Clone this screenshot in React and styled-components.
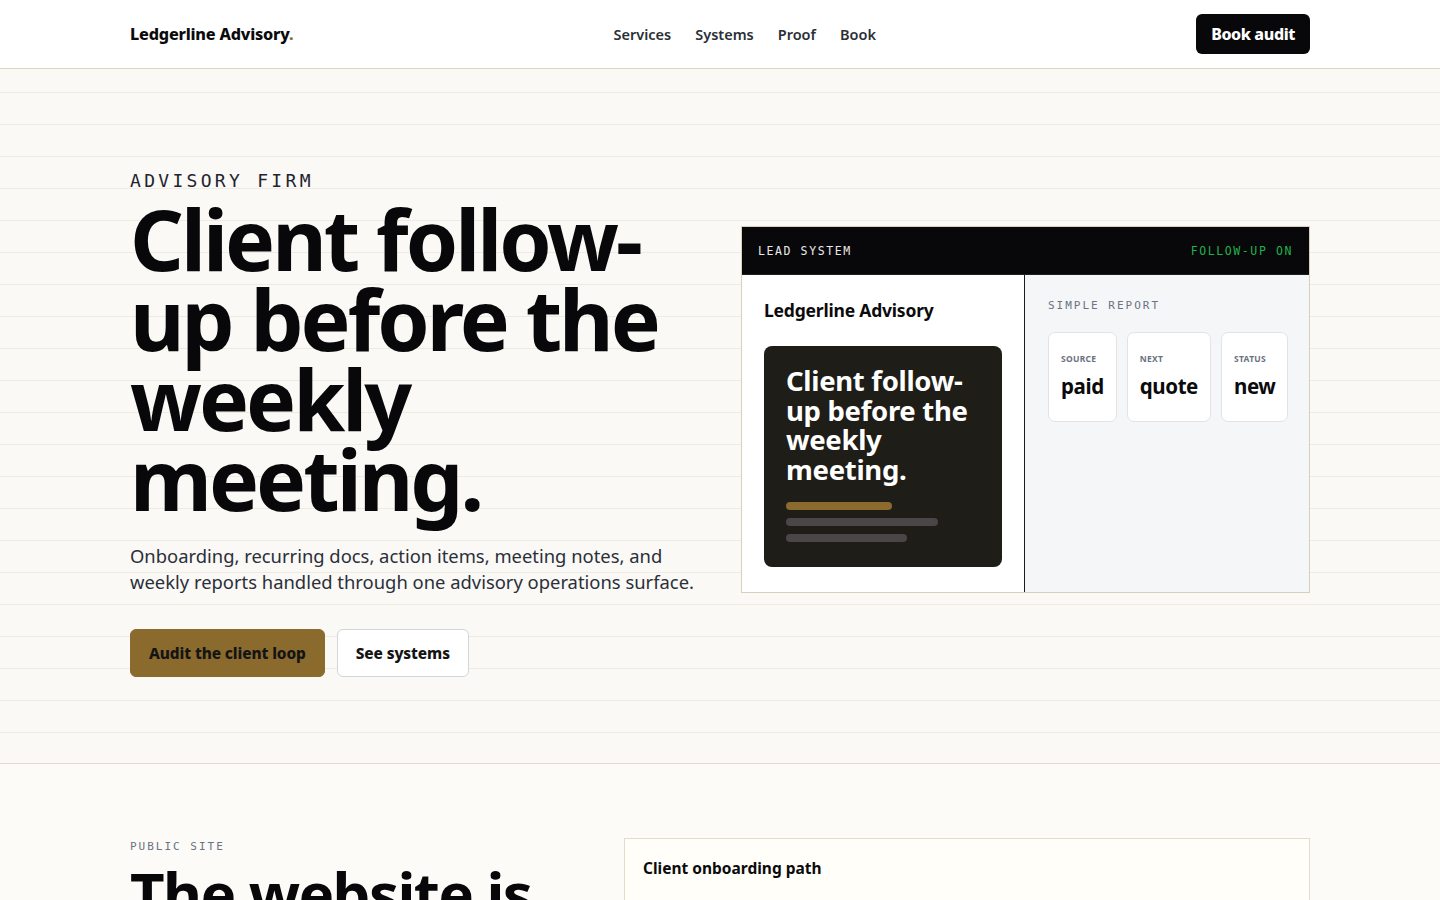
import React from "react";
import { styled, createGlobalStyle } from "styled-components";

const GlobalStyle = createGlobalStyle`
  * { box-sizing: border-box; }
  body {
    margin: 0;
    background: #fcfbf7;
    font-family: "Noto Sans", "Open Sans", Arial, sans-serif;
    color: #0b0b0d;
  }
  h1, h2, h3, p { margin: 0; }
`;

const mono = `"DejaVu Sans Mono", "Liberation Mono", monospace`;

const Container = styled.div`
  width: 1180px;
  margin: 0 auto;
`;

const Header = styled.header`
  background: #fff;
  border-bottom: 1px solid #ddd6c6;
  height: 69px;
`;

const HeaderInner = styled(Container)`
  height: 68px;
  display: flex;
  justify-content: space-between;
  align-items: center;
`;

const Logo = styled.a`
  font-size: 16.2px;
  font-weight: 800;
  color: #0b0b0d;
  letter-spacing: -0.2px;
  & span { color: #8b6a2e; }
`;

const Nav = styled.nav`
  display: flex;
  gap: 24px;
  & a {
    font-size: 14.5px;
    font-weight: 600;
    color: #2b2f36;
    text-decoration: none;
  }
`;

const HeaderButton = styled.a`
  background: #08080a;
  color: #fff;
  font-weight: 800;
  font-size: 16px;
  height: 40px;
  padding: 0 15px;
  border-radius: 6px;
  display: flex;
  align-items: center;
  letter-spacing: -0.4px;
`;

const Hero = styled.section`
  border-bottom: 1px solid #dfdbd0;
  background-color: #faf9f5;
  background-image: repeating-linear-gradient(
    to bottom,
    transparent 0 23px,
    #eeebe3 23px 24px,
    transparent 24px 32px
  );
`;

const HeroInner = styled(Container)`
  display: grid;
  grid-template-columns: minmax(0, 1fr) 569px;
  gap: 40px;
  align-items: start;
  padding: 101px 0 86px;
`;

const Eyebrow = styled.p`
  font-family: ${mono};
  font-size: ${(p) => p.$size || 12}px;
  letter-spacing: ${(p) => p.$spacing || 2}px;
  color: ${(p) => p.$color || "#6b7280"};
  text-transform: uppercase;
`;

const HeroTitle = styled.h1`
  font-size: 84px;
  line-height: 80px;
  font-weight: 700;
  letter-spacing: -3px;
  margin-top: 8px;
  color: #08080a;
`;

const Lead = styled.p`
  margin-top: 24px;
  font-size: 18.4px;
  line-height: 26px;
  color: #2a2f3a;
`;

const Actions = styled.div`
  display: flex;
  gap: 12px;
  margin-top: 34px;
`;

const Button = styled.a`
  height: 48px;
  display: flex;
  align-items: center;
  padding: 0 18px;
  border-radius: 6px;
  font-size: 15.4px;
  font-weight: 800;
  color: #141414;
  letter-spacing: -0.1px;
  background: ${(p) => (p.$primary ? "#8b6a2e" : "#fff")};
  border: 1px solid ${(p) => (p.$primary ? "#8b6a2e" : "#d3d6de")};
`;

const Card = styled.div`
  margin-top: 56px;
  border: 1px solid #d8cfbd;
  background: #fff;
`;

const CardBar = styled.div`
  background: #08080a;
  height: 48px;
  padding: 0 16px;
  display: flex;
  align-items: center;
  justify-content: space-between;
  border-bottom: 1px solid #1f1f22;
`;

const CardBody = styled.div`
  display: grid;
  grid-template-columns: 283px minmax(0, 1fr);
  height: 317px;
`;

const Pane = styled.div`
  min-width: 0;
  padding: ${(p) => p.$pad || "22px"};
  background: ${(p) => p.$bg || "#fff"};
  border-right: ${(p) => (p.$divider ? "1px solid #1c1c1e" : "none")};
`;

const PaneTitle = styled.h3`
  font-size: 17.5px;
  font-weight: 700;
  letter-spacing: -0.2px;
  margin-top: 1px;
`;

const Preview = styled.div`
  margin-top: 24px;
  background: #1f1d18;
  border-radius: 8px;
  padding: 20px 22px 22px;
  height: 221px;
`;

const PreviewTitle = styled.h2`
  color: #fff;
  font-size: 27.5px;
  line-height: 29.5px;
  font-weight: 700;
  letter-spacing: -0.3px;
`;

const Bars = styled.div`
  margin-top: 18px;
  display: flex;
  flex-direction: column;
  gap: 8px;
`;

const Bar = styled.span`
  display: block;
  height: 8px;
  border-radius: 4px;
  width: ${(p) => p.$w}px;
  background: ${(p) => (p.$gold ? "#8b6a2e" : "#4a4648")};
`;

const Stats = styled.div`
  display: flex;
  gap: 10px;
  margin-top: 20px;
`;

const Stat = styled.div`
  background: #fff;
  border: 1px solid #e3e3e6;
  border-radius: 7px;
  padding: 20px 12px 14px;
  height: 90px;
  & small {
    display: block;
    font-size: 8.5px;
    font-weight: 700;
    letter-spacing: 0.3px;
    color: #6b7280;
    text-transform: uppercase;
  }
  & strong {
    display: block;
    margin-top: 8px;
    font-size: 20.5px;
    font-weight: 700;
    letter-spacing: -0.4px;
    color: #0b0b0d;
  }
`;

const Section = styled.section`
  background: #fcfbf7;
`;

const SectionInner = styled(Container)`
  display: grid;
  grid-template-columns: minmax(0, 1fr) 686px;
  gap: 44px;
  padding-top: 74px;
`;

const SectionLeft = styled.div`
  padding-top: 2px;
`;

const SectionTitle = styled.h2`
  margin-top: 8px;
  font-size: 60px;
  line-height: 64px;
  font-weight: 700;
  letter-spacing: -1.6px;
  color: #08080a;
`;

const PathCard = styled.div`
  background: #fffef8;
  border: 1px solid #e2dccd;
  padding: 18px 18px 40px;
  & h3 {
    font-size: 15.5px;
    font-weight: 700;
  }
`;

export default function App() {
  return (
    <>
      <GlobalStyle />
      <Header>
        <HeaderInner>
          <Logo>
            Ledgerline Advisory<span>.</span>
          </Logo>
          <Nav>
            <a>Services</a>
            <a>Systems</a>
            <a>Proof</a>
            <a>Book</a>
          </Nav>
          <HeaderButton>Book audit</HeaderButton>
        </HeaderInner>
      </Header>

      <Hero>
        <HeroInner>
          <div>
            <Eyebrow $size={18} $spacing={3.3} $color="#1f2430">
              Advisory firm
            </Eyebrow>
            <HeroTitle>Client follow-up before the weekly meeting.</HeroTitle>
            <Lead>
              Onboarding, recurring docs, action items, meeting notes, and
              weekly reports handled through one advisory operations surface.
            </Lead>
            <Actions>
              <Button $primary>Audit the client loop</Button>
              <Button>See systems</Button>
            </Actions>
          </div>

          <Card>
            <CardBar>
              <Eyebrow $size={11.5} $spacing={1.6} $color="#e8e8ea">
                Lead system
              </Eyebrow>
              <Eyebrow $size={11.5} $spacing={1.6} $color="#22b14c">
                Follow-up on
              </Eyebrow>
            </CardBar>
            <CardBody>
              <Pane $divider>
                <PaneTitle>Ledgerline Advisory</PaneTitle>
                <Preview>
                  <PreviewTitle>
                    Client follow-up before the weekly meeting.
                  </PreviewTitle>
                  <Bars>
                    <Bar $gold $w={106} />
                    <Bar $w={152} />
                    <Bar $w={121} />
                  </Bars>
                </Preview>
              </Pane>
              <Pane $bg="#f5f6f8" $pad="24px 22px 24px 23px">
                <Eyebrow $size={11} $spacing={2} $color="#6b7280">
                  Simple report
                </Eyebrow>
                <Stats>
                  <Stat>
                    <small>Source</small>
                    <strong>paid</strong>
                  </Stat>
                  <Stat>
                    <small>Next</small>
                    <strong>quote</strong>
                  </Stat>
                  <Stat>
                    <small>Status</small>
                    <strong>new</strong>
                  </Stat>
                </Stats>
              </Pane>
            </CardBody>
          </Card>
        </HeroInner>
      </Hero>

      <Section>
        <SectionInner>
          <SectionLeft>
            <Eyebrow $size={11} $spacing={2} $color="#6b7280">
              Public site
            </Eyebrow>
            <SectionTitle>The website is the first system.</SectionTitle>
          </SectionLeft>
          <PathCard>
            <h3>Client onboarding path</h3>
          </PathCard>
        </SectionInner>
      </Section>
    </>
  );
}
